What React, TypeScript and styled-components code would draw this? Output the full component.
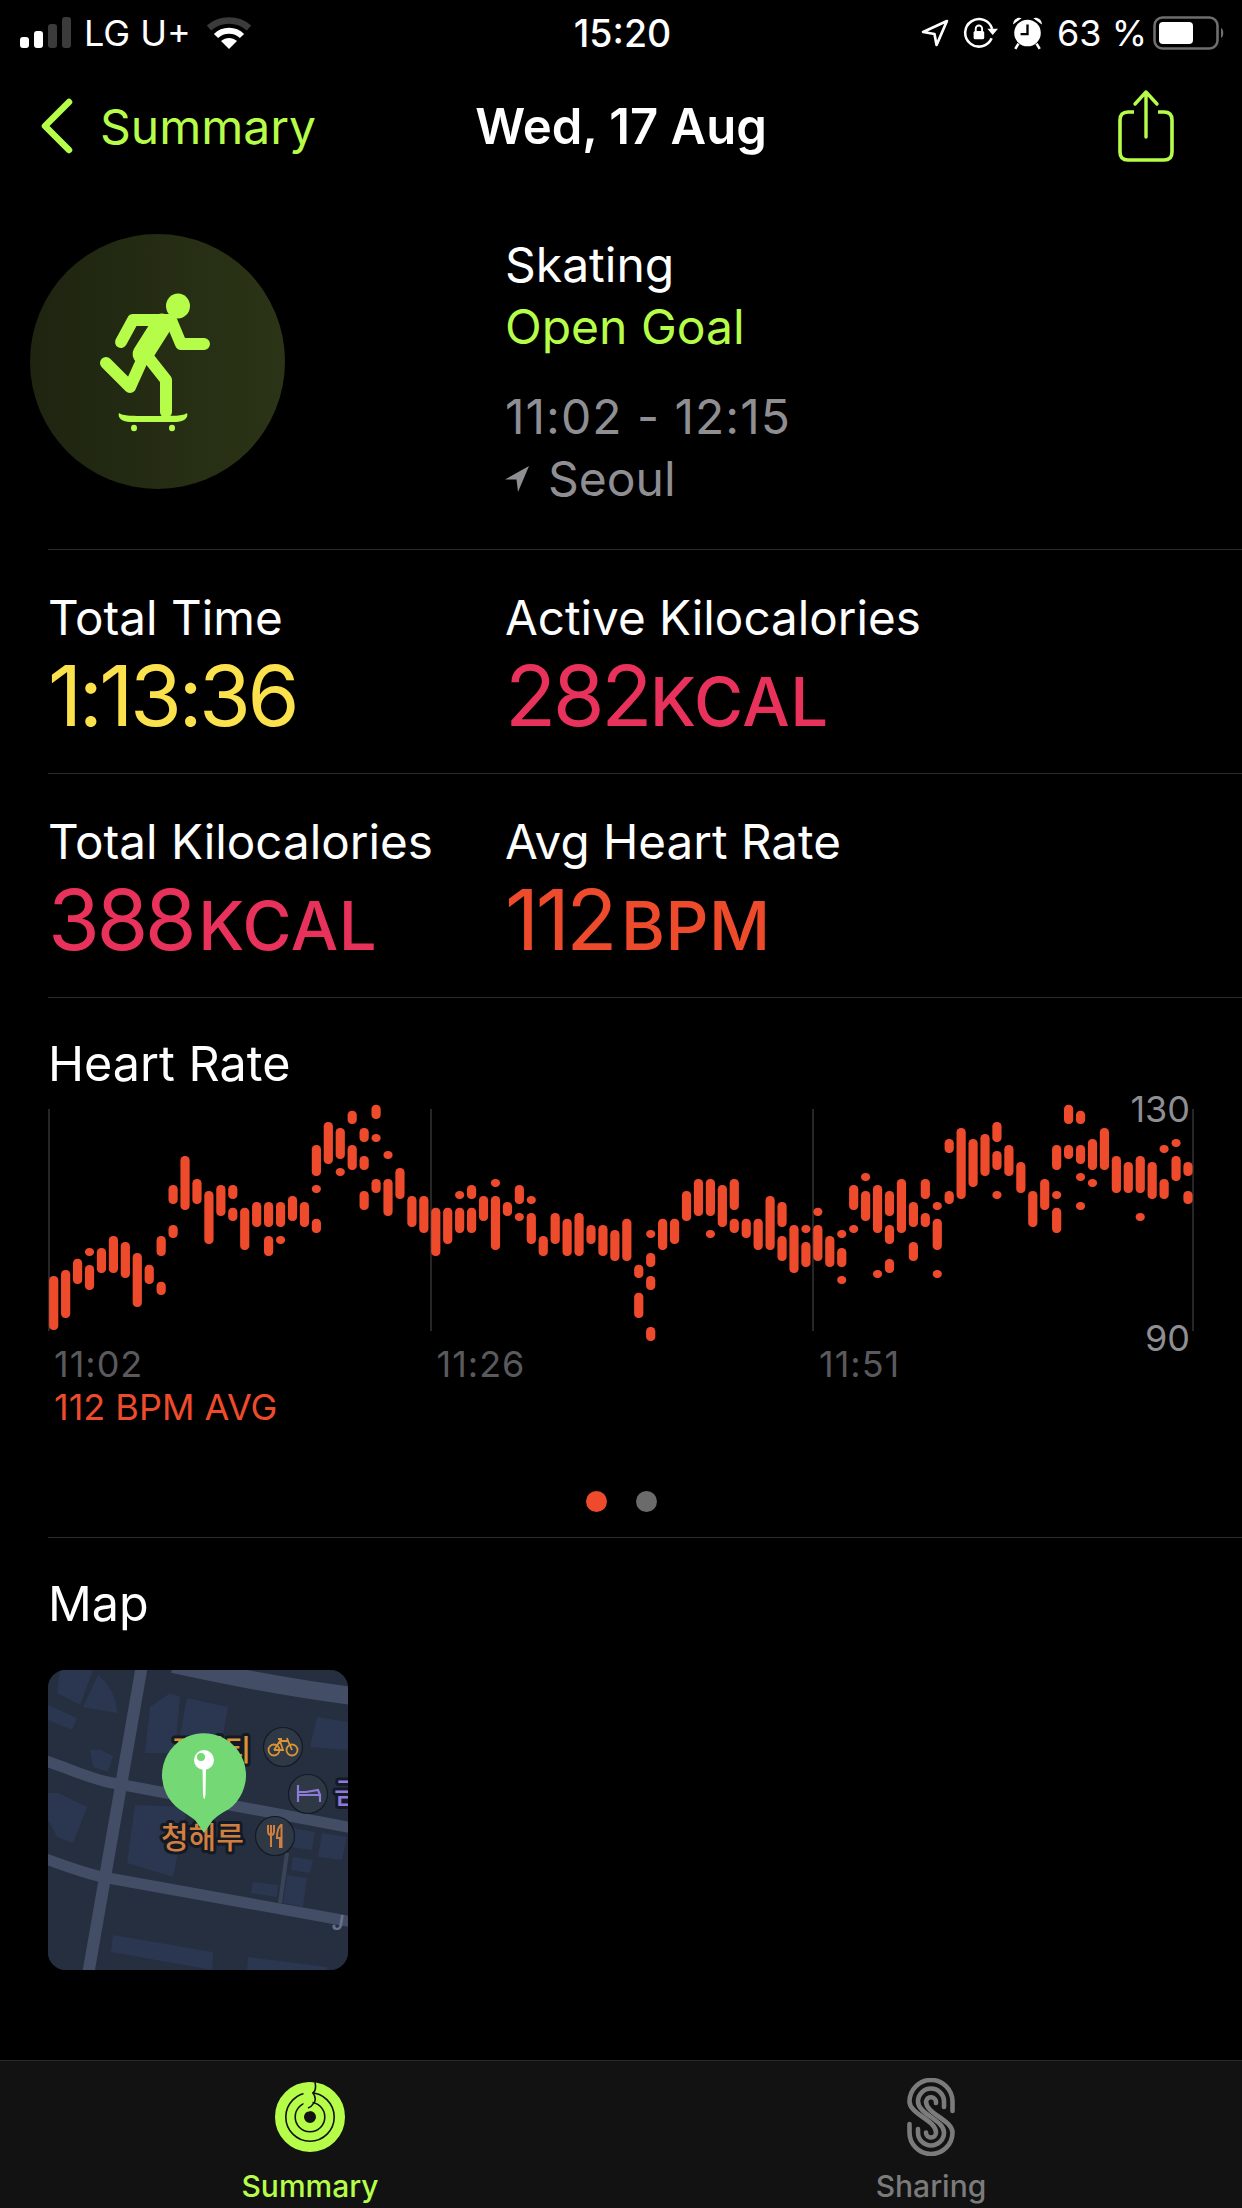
import styled, { createGlobalStyle } from 'styled-components'

const LIME = '#b6fd4a'
const RED = '#ee4b2d'
const PINK = '#e8325c'
const GREY = '#8e8e93'

// y ranges of each heart rate column, in 1/3 px from the top of the chart crop
const HEART: number[][][] = [
    [[555, 717]], [[537, 681]], [[503, 579]], [[471, 495], [522, 597]], [[471, 546]], [[435, 546]],
    [[453, 561]], [[486, 648]], [[521, 579]], [[435, 495], [572, 612]], [[282, 339], [402, 441]], [[195, 357]],
    [[264, 339]], [[300, 459]], [[282, 375]], [[282, 324], [350, 390]], [[350, 477]], [[333, 408]],
    [[333, 408], [435, 495]], [[333, 408], [435, 459]], [[315, 390]], [[333, 408]], [[162, 255], [282, 306], [383, 426]], [[93, 219]],
    [[111, 204], [231, 255]], [[59, 99], [162, 237]], [[111, 153], [195, 237], [300, 357]], [[41, 84], [129, 153], [264, 306]], [[180, 204], [264, 375]], [[231, 324]],
    [[315, 408]], [[315, 426]], [[350, 495]], [[350, 459]], [[300, 324], [350, 426]], [[282, 324], [350, 426]],
    [[315, 390]], [[264, 288], [315, 477]], [[333, 375]], [[282, 339], [366, 390]], [[315, 339], [366, 459]], [[435, 495]],
    [[366, 459]], [[383, 495]], [[366, 495]], [[402, 459]], [[402, 495]], [[417, 510]],
    [[383, 510]], [[521, 561], [605, 681]], [[417, 441], [486, 528], [555, 597], [708, 750]], [[383, 477]], [[383, 459]], [[300, 390]],
    [[264, 375]], [[264, 375], [417, 441]], [[282, 408]], [[264, 357], [383, 426]], [[383, 441]], [[383, 477]],
    [[315, 477]], [[333, 408], [435, 510]], [[402, 546]], [[402, 426], [453, 528]], [[350, 375], [402, 510]], [[435, 528]],
    [[417, 441], [471, 528], [555, 579]], [[282, 357], [402, 426]], [[246, 270], [300, 390]], [[282, 426], [537, 561]], [[300, 375], [402, 459], [504, 546]], [[264, 426]],
    [[333, 408], [453, 510]], [[264, 324], [366, 408]], [[333, 357], [383, 477], [537, 561]], [[144, 186], [300, 339]], [[111, 324]], [[144, 288]],
    [[129, 255]], [[93, 153], [180, 237], [300, 324]], [[162, 255]], [[213, 306]], [[300, 408]], [[264, 357]],
    [[162, 237], [300, 324], [350, 426]], [[41, 99], [162, 204]], [[59, 99], [162, 219], [246, 270], [333, 357]], [[144, 237], [264, 288]], [[111, 237]], [[195, 306]],
    [[213, 306]], [[195, 306], [366, 390]], [[213, 324]], [[162, 186], [264, 324]], [[144, 168], [195, 270]], [[213, 255], [300, 339]],
]

const GRID_LINES = [1, 383, 765, 1145]

const GlobalStyle = createGlobalStyle`
    html, body {
        margin: 0;
        padding: 0;
        background: #000;
    }
    body {
        font-family: Inter, "Noto Sans", sans-serif;
        color: #fff;
    }
`

const Page = styled.div`
    width: 1242px;
    height: 2208px;
    display: flex;
    flex-direction: column;
    background: #000;
    overflow: hidden;
`

const StatusBar = styled.div`
    height: 66px;
    display: grid;
    grid-template-columns: 1fr auto 1fr;
    align-items: center;
    padding: 0 17px 0 20px;
    font-size: 36px;
    box-sizing: border-box;
`

const StatusLeft = styled.div`
    display: flex;
    align-items: center;
    gap: 12px;
`

const StatusRight = styled.div`
    display: flex;
    align-items: center;
    justify-content: flex-end;
    gap: 14px;
`

const BatteryWrap = styled.div`
    display: flex;
    margin-left: -8px;
`

const WifiWrap = styled.div`
    display: flex;
    margin-left: 3px;
`

const Clock = styled.div`
    font-weight: 500;
    font-size: 37.5px;
`

const NavBar = styled.div`
    height: 120px;
    display: grid;
    grid-template-columns: 1fr auto 1fr;
    align-items: center;
    padding: 0 40px;
`

const BackLink = styled.div`
    display: flex;
    align-items: center;
    gap: 27px;
    color: ${LIME};
    font-size: 48px;
`

const NavTitle = styled.div`
    font-size: 49px;
    font-weight: 600;
`

const ShareButton = styled.div`
    display: flex;
    justify-content: flex-end;
    margin-right: 28px;
`

const InfoSection = styled.div`
    display: grid;
    grid-template-columns: 475px 1fr;
    height: 363px;
    padding: 48px 0 0 30px;
    box-sizing: border-box;
`

const IconDisc = styled.div`
    width: 255px;
    height: 255px;
    border-radius: 50%;
    background: linear-gradient(90deg, #1e2410, #2b3416);
`

const InfoText = styled.div`
    display: flex;
    flex-direction: column;
`

const InfoLine = styled.div<{ $color?: string; $gap?: number; $tracking?: number }>`
    font-size: 48px;
    line-height: 62px;
    color: ${p => p.$color || '#fff'};
    margin-top: ${p => p.$gap || 0}px;
    letter-spacing: ${p => p.$tracking || 0}px;
    display: flex;
    align-items: center;
    gap: 19px;
`

const Rule = styled.div`
    height: 1px;
    margin-left: 48px;
    background: #2c2c2e;
`

const StatRow = styled.div`
    display: grid;
    grid-template-columns: 457px 1fr;
    height: 223px;
    padding: 37px 0 0 48px;
    box-sizing: border-box;
`

const StatLabel = styled.div`
    font-size: 47.6px;
    line-height: 62px;
    white-space: nowrap;
`

const StatValue = styled.div<{ $color: string }>`
    font-size: 84px;
    line-height: 90px;
    padding-top: 2px;
    letter-spacing: -3.5px;
    color: ${p => p.$color};
    white-space: nowrap;
`

const Unit = styled.span<{ $gap: number }>`
    font-size: 67px;
    font-weight: 500;
    letter-spacing: 0.5px;
    margin-left: ${p => p.$gap}px;
`

const ChartSection = styled.div`
    padding: 35px 0 25px 48px;
`

const SectionTitle = styled.div`
    font-size: 48.5px;
    line-height: 62px;
`

const ChartBox = styled.div`
    position: relative;
    width: 1146px;
    height: 260px;
    margin-top: -4px;
`

const AxisValue = styled.div<{ $top: number }>`
    position: absolute;
    right: 4px;
    top: ${p => p.$top}px;
    font-size: 36px;
    line-height: 40px;
    color: ${GREY};
`

const TimeRow = styled.div`
    display: grid;
    grid-template-columns: repeat(3, 382.5px);
    margin-top: -7px;
    padding-left: 6px;
`

const TimeLabel = styled.div`
    font-size: 36px;
    line-height: 40px;
    letter-spacing: 1px;
    color: #5a5a5e;
`

const AvgLabel = styled.div`
    font-size: 36px;
    line-height: 46px;
    color: ${RED};
    padding-left: 6px;
`

const Dots = styled.div`
    display: flex;
    justify-content: center;
    gap: 29px;
    margin: 61px 48px 0 0;
`

const Dot = styled.div<{ $color: string }>`
    width: 21px;
    height: 21px;
    border-radius: 50%;
    background: ${p => p.$color};
`

const MapSection = styled.div`
    padding: 35px 0 0 48px;
`

const MapCard = styled.div`
    width: 300px;
    height: 300px;
    margin-top: 35px;
    border-radius: 18px;
    overflow: hidden;
    background: #252f40;
`

const TabBar = styled.div`
    margin-top: auto;
    height: 148px;
    display: grid;
    grid-template-columns: 620px 1fr;
    background: #121212;
    border-top: 1px solid #2a2a2a;
    box-sizing: border-box;
`

const Tab = styled.div<{ $color: string }>`
    display: flex;
    flex-direction: column;
    align-items: center;
    color: ${p => p.$color};
    font-size: 30px;
    font-weight: 500;
    line-height: 40px;
`

const TabIcon = styled.div`
    height: 78px;
    margin-top: 17px;
    margin-bottom: 10px;
    display: flex;
    align-items: center;
`

const SignalIcon = () => (
    <svg width="52" height="32" viewBox="0 0 52 32">
        <rect x="0" y="20" width="9" height="11" rx="3" fill="#fff" />
        <rect x="14" y="14" width="9" height="17" rx="3" fill="#fff" />
        <rect x="28" y="7" width="9" height="24" rx="3" fill="#3b3b3b" />
        <rect x="42" y="0" width="9" height="31" rx="3" fill="#3b3b3b" />
    </svg>
)

const WifiIcon = () => (
    <svg width="46" height="34" viewBox="0 0 46 34">
        <path d="M3 12 C14 2 32 2 43 12" fill="none" stroke="#3b3b3b" strokeWidth="6.5" />
        <path d="M10 20 C17 13 29 13 36 20" fill="none" stroke="#fff" strokeWidth="6" />
        <path d="M23 33 L15 25 C20 21 26 21 31 25 Z" fill="#fff" />
    </svg>
)

const ArrowIcon = () => (
    <svg width="28" height="28" viewBox="0 0 27 27">
        <path d="M25 2 L2 12.5 L13 14.5 L15 25 Z" fill="none" stroke="#fff" strokeWidth="2.6" strokeLinejoin="round" />
    </svg>
)

const RotationIcon = () => (
    <svg width="35" height="32" viewBox="0 0 33 30">
        <path d="M27 20 A13 13 0 1 1 27.5 11" fill="none" stroke="#fff" strokeWidth="2.4" />
        <path d="M23 11 L33 11 L28 17 Z" fill="#fff" />
        <rect x="10" y="13" width="10" height="8" rx="1.5" fill="#fff" />
        <path d="M12 13 V11 A3 3 0 0 1 18 11 V13" fill="none" stroke="#fff" strokeWidth="1.8" />
    </svg>
)

const AlarmIcon = () => (
    <svg width="31" height="34" viewBox="0 0 29 32">
        <path d="M1 8 A6 6 0 0 1 9 2 Z M28 8 A6 6 0 0 0 20 2 Z" fill="#fff" />
        <circle cx="14.5" cy="16" r="12.5" fill="#fff" />
        <path d="M14.5 8 V17 H8" fill="none" stroke="#000" strokeWidth="2.2" />
        <path d="M6 26 L3 31 M23 26 L26 31" stroke="#fff" strokeWidth="2.4" />
    </svg>
)

const BatteryIcon = () => (
    <svg width="72" height="34" viewBox="0 0 72 34">
        <rect x="1.5" y="1.5" width="63" height="31" rx="8" fill="none" stroke="#6e6e6e" strokeWidth="2.6" />
        <rect x="6" y="6" width="34" height="22" rx="4" fill="#fff" />
        <path d="M68 12 C71 13 71 21 68 22 Z" fill="#6e6e6e" />
    </svg>
)

const ChevronIcon = () => (
    <svg width="33" height="56" viewBox="0 0 33 56">
        <path d="M29 4 L5 28 L29 52" fill="none" stroke={LIME} strokeWidth="6.5" strokeLinecap="round" strokeLinejoin="round" />
    </svg>
)

const ShareIcon = () => (
    <svg width="56" height="74" viewBox="0 0 56 74">
        <path d="M16 23 H10 Q2 23 2 31 V63 Q2 71 10 71 H46 Q54 71 54 63 V31 Q54 23 46 23 H40" fill="none" stroke={LIME} strokeWidth="3.6" />
        <path d="M28 48 V3 M17 15 L28 3 L39 15" fill="none" stroke={LIME} strokeWidth="3.4" strokeLinecap="round" strokeLinejoin="round" />
    </svg>
)

const SkaterIcon = () => (
    <svg width="255" height="255" viewBox="0 0 255 255">
        <ellipse cx="148" cy="72" rx="12" ry="12.5" fill={LIME} />
        <g fill="none" stroke={LIME} strokeLinecap="round" strokeLinejoin="round">
            <path d="M91 108 L103 86 H141 L151 110 H174" strokeWidth="12" />
            <path d="M132 90 L113 120" strokeWidth="21" />
            <path d="M76 129 L100 153 L114 122" strokeWidth="12" />
            <path d="M117 122 L136 146 V178" strokeWidth="12" />
        </g>
        <path d="M89 179 C93 182 102 182 123 182 C144 182 153 182 157 179 C159 184 153 188 146 188 H100 C93 188 87 184 89 179 Z" fill={LIME} />
        <ellipse cx="104" cy="194" rx="3" ry="3.2" fill={LIME} />
        <ellipse cx="142" cy="194" rx="3" ry="3.2" fill={LIME} />
    </svg>
)

const SmallArrow = () => (
    <svg width="24" height="26" viewBox="0 0 24 26">
        <path d="M24 0 L0 13.5 L11.5 13.5 L13 26 Z" fill={GREY} />
    </svg>
)

const HeartChart = () => (
    <svg width="1146" height="260" viewBox="0 0 1146 260">
        {GRID_LINES.map(x => (
            <line key={x} x1={x} x2={x} y1="18" y2="240" stroke="#303030" strokeWidth="1.6" />
        ))}
        {HEART.map((column, i) =>
            column.map(([from, to]) => (
                <rect
                    key={`${i}-${from}`}
                    x={1.1 + i * 11.94}
                    y={from / 3}
                    width="9.2"
                    height={(to - from) / 3}
                    rx="4.3"
                    fill={RED}
                />
            ))
        )}
    </svg>
)

const MAP_BLOCKS = [
    '12,0 45,0 32,35 9,23',
    '0,35 29,48 24,60 0,50',
    '42,80 53,80 65,86 60,102 45,97',
    '102,37 122,23 132,27 127,83 97,83',
    '139,28 180,37 174,70 129,80',
    '269,47 300,52 300,80 262,77',
    '0,123 10,123 39,137 25,173 9,167 0,150',
    '87,135 139,137 125,207 79,193',
    '245,158 267,162 264,180 242,177',
    '274,163 299,167 294,190 270,187',
    '245,187 265,190 262,203 243,200',
    '239,205 259,208 255,237 235,233',
    '205,212 230,215 229,227 203,223',
    '65,265 165,282 164,300 63,282',
    '200,287 279,297 279,300 199,300',
]

const MapView = () => (
    <svg width="300" height="300" viewBox="0 0 300 300">
        <rect width="300" height="300" fill="#252f40" />
        {MAP_BLOCKS.map(points => (
            <polygon key={points} points={points} fill="#2b3650" />
        ))}
        <path d="M50 5 C62 15 69 28 69 43 L35 37 Z" fill="#2b3650" />
        <g fill="none" stroke="#434e66" strokeLinejoin="round">
            <path d="M-5 90 C20 98 45 110 65 113 L305 158" strokeWidth="11" />
            <path d="M-5 188 C15 195 40 205 60 208 L305 252" strokeWidth="11" />
            <path d="M94 -5 L40 305" strokeWidth="12" />
            <path d="M125 -6 C180 6 240 18 305 26" strokeWidth="18" />
            <path d="M239 183 L232 233" stroke="#3a4459" strokeWidth="4" />
        </g>
        <g fontFamily="'Noto Sans CJK KR', sans-serif" fontWeight="500" stroke="#141a25" strokeWidth="6" paintOrder="stroke" strokeLinejoin="round">
            <text x="123" y="91" fontSize="29" fill="#d99535">프리티</text>
            <text x="286" y="134" fontSize="29" fill="#8f7ad9">금</text>
            <text x="113" y="178" fontSize="30" fill="#d17f3f">청해루</text>
        </g>
        <text x="284" y="260" fontSize="20" fontFamily="Inter, sans-serif" fontStyle="italic" fontWeight="600" fill="#66718a">J</text>

        <g stroke="#141a25" strokeWidth="1.2" fill="#2f3845">
            <circle cx="235" cy="77" r="19.5" />
            <circle cx="260" cy="124" r="19.5" />
            <circle cx="227" cy="166" r="19.5" />
        </g>
        <g fill="none" stroke="#d99535" strokeWidth="1.8">
            <circle cx="226" cy="80" r="5.5" />
            <circle cx="244" cy="80" r="5.5" />
            <path d="M226 80 L232 71 H240 L244 80 M232 71 L235 80 H226 M240 71 L239 68 M230 69 H234" />
        </g>
        <path d="M250 115 V132 M250 125 H272 V132 M250 122 H258 L270 120 L272 125" fill="none" stroke="#8f7ad9" strokeWidth="2.2" />
        <path d="M220 155 V161 Q220 165 223 165 V177 M223 155 V165 M226 155 V161 Q226 165 223 165 M233 155 Q229 158 229 168 H232 V177 H233.5 V155 Z" fill="none" stroke="#d17f3f" strokeWidth="2" />

        <path d="M114 105 A42 42 0 1 1 181 139 Q170 145 165 150 L156 163 L147 150 Q140 145 131 139 A42 42 0 0 1 114 105 Z" fill="#74d874" />
        <path d="M154.5 98 H158 L157.5 125 Q156.3 133 155 125 Z" fill="#fff" />
        <circle cx="156" cy="90" r="10" fill="#fff" />
        <circle cx="153" cy="87" r="4" fill="#74d874" />
    </svg>
)

const RingsIcon = () => (
    <svg width="70" height="70" viewBox="0 0 70 70">
        <g fill="none" stroke={LIME}>
            <circle cx="35" cy="35" r="30" strokeWidth="10" />
            <circle cx="35" cy="35" r="19.5" strokeWidth="7.8" />
            <circle cx="35" cy="35" r="10" strokeWidth="8" />
        </g>
        <path d="M33 5 V25" stroke={LIME} strokeWidth="9" strokeLinecap="round" />
        <path d="M40 0 C41 5 41 9 38 11 C41 15 41 20 38 22 C37 24 36 25 33 26" fill="none" stroke="#121212" strokeWidth="1.6" />
    </svg>
)

const SharingIcon = () => (
    <svg width="48" height="78" viewBox="0 0 48 78">
        <g fill="none" stroke="#7b7b7b" strokeWidth="4.6" strokeLinecap="round">
            <path d="M45.5 33 V23.5 A21.5 21.5 0 0 0 2.5 23.5 C2.5 36 29 42 29 54.5 A5 5 0 0 1 19 54.5" />
            <path d="M37 29 V23.5 A13 13 0 0 0 11 23.5 C11 36 37 42 37 54.5 A13 13 0 0 1 11 54.5 V51" />
            <path d="M29 25 A5 5 0 0 0 19 23.5 C19 36 45.5 42 45.5 54.5 A21.5 21.5 0 0 1 2.5 54.5 V46" />
        </g>
    </svg>
)

export default function App() {
    return (
        <Page>
            <GlobalStyle />
            <StatusBar>
                <StatusLeft>
                    <SignalIcon />
                    <span>LG U+</span>
                    <WifiWrap><WifiIcon /></WifiWrap>
                </StatusLeft>
                <Clock>15:20</Clock>
                <StatusRight>
                    <ArrowIcon />
                    <RotationIcon />
                    <AlarmIcon />
                    <span>63 %</span>
                    <BatteryWrap><BatteryIcon /></BatteryWrap>
                </StatusRight>
            </StatusBar>

            <NavBar>
                <BackLink>
                    <ChevronIcon />
                    Summary
                </BackLink>
                <NavTitle>Wed, 17 Aug</NavTitle>
                <ShareButton>
                    <ShareIcon />
                </ShareButton>
            </NavBar>

            <InfoSection>
                <IconDisc>
                    <SkaterIcon />
                </IconDisc>
                <InfoText>
                    <InfoLine>Skating</InfoLine>
                    <InfoLine $color={LIME}>Open Goal</InfoLine>
                    <InfoLine $color={GREY} $gap={28} $tracking={1}>11:02 - 12:15</InfoLine>
                    <InfoLine $color={GREY}>
                        <SmallArrow />
                        Seoul
                    </InfoLine>
                </InfoText>
            </InfoSection>
            <Rule />

            <StatRow>
                <div>
                    <StatLabel>Total Time</StatLabel>
                    <StatValue $color="#fbe24d">1:13:36</StatValue>
                </div>
                <div>
                    <StatLabel>Active Kilocalories</StatLabel>
                    <StatValue $color={PINK}>282<Unit $gap={1}>KCAL</Unit></StatValue>
                </div>
            </StatRow>
            <Rule />

            <StatRow>
                <div>
                    <StatLabel>Total Kilocalories</StatLabel>
                    <StatValue $color={PINK}>388<Unit $gap={5}>KCAL</Unit></StatValue>
                </div>
                <div>
                    <StatLabel>Avg Heart Rate</StatLabel>
                    <StatValue $color={RED}>112<Unit $gap={7}>BPM</Unit></StatValue>
                </div>
            </StatRow>
            <Rule />

            <ChartSection>
                <SectionTitle>Heart Rate</SectionTitle>
                <ChartBox>
                    <HeartChart />
                    <AxisValue $top={-2}>130</AxisValue>
                    <AxisValue $top={227}>90</AxisValue>
                </ChartBox>
                <TimeRow>
                    <TimeLabel>11:02</TimeLabel>
                    <TimeLabel>11:26</TimeLabel>
                    <TimeLabel>11:51</TimeLabel>
                </TimeRow>
                <AvgLabel>112 BPM AVG</AvgLabel>
                <Dots>
                    <Dot $color={RED} />
                    <Dot $color="#6b6b6b" />
                </Dots>
            </ChartSection>
            <Rule />

            <MapSection>
                <SectionTitle>Map</SectionTitle>
                <MapCard>
                    <MapView />
                </MapCard>
            </MapSection>

            <TabBar>
                <Tab $color={LIME}>
                    <TabIcon><RingsIcon /></TabIcon>
                    Summary
                </Tab>
                <Tab $color="#7b7b7b">
                    <TabIcon><SharingIcon /></TabIcon>
                    Sharing
                </Tab>
            </TabBar>
        </Page>
    )
}
